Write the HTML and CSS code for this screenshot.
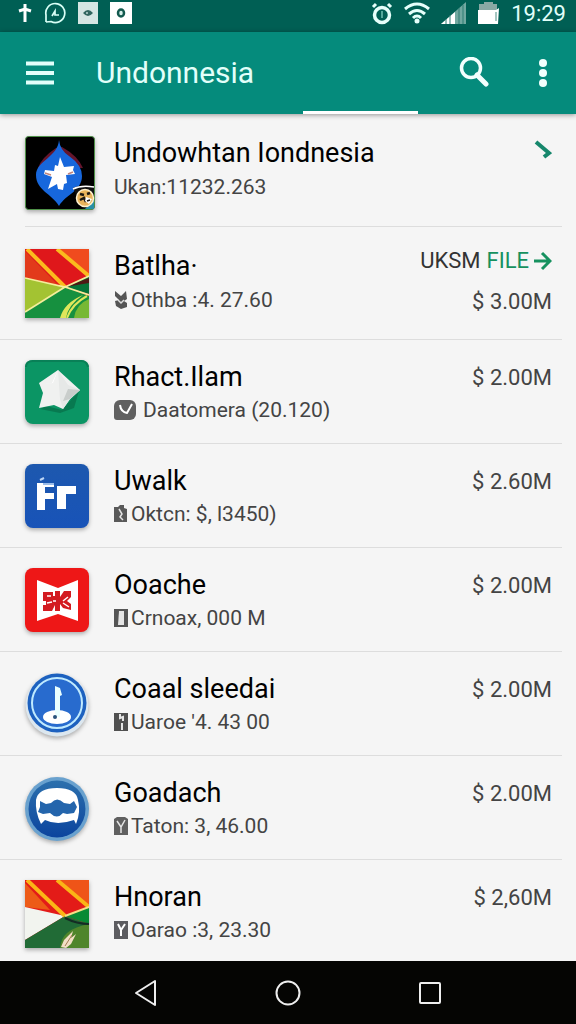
FILE: index.html
```
<!DOCTYPE html>
<html lang="en">
<head>
    <title>Undonnesia</title>
    <meta charset="UTF-8" />
    <meta name="viewport" content="width=device-width, initial-scale=1">
    <link rel="stylesheet" href="styles.css">
</head>
<body>
    <div class="status-bar">
        <div class="status-left">
            <svg width="14" height="22" viewBox="0 0 14 22"><path d="M7 2v18M1 9l6-2 6 2" fill="none" stroke="#fff" stroke-width="3"/></svg>
            <svg width="22" height="22" viewBox="0 0 22 22"><path d="M2 20V13A9.500 9.500 0 1 1 7 19.500L2 20M8 14l3-5v4h4" fill="none" stroke="#d8fff6" stroke-width="1.700"/></svg>
            <svg width="20" height="22" viewBox="0 0 20 22"><path d="M0 0h20v22H0z" fill="#d5e6e3"/><path d="M5 11q5-6 10 0-5 6-10 0" fill="#31665f"/><circle cx="9" cy="11" r="1" fill="#b9d3cf"/></svg>
            <svg width="22" height="22" viewBox="0 0 22 22"><path d="M0 0h22v22H0z" fill="#fff"/><ellipse cx="11" cy="11" rx="3" ry="3.500" fill="#d7efea" stroke="#12594e" stroke-width="2.500"/></svg>
        </div>
        <div class="status-right">
            <svg width="22" height="24" viewBox="0 0 22 24"><circle cx="11" cy="14" r="7.500" fill="none" stroke="#e6fffb" stroke-width="3.500"/><path d="M2 6l3-3M17 3l3 3" stroke="#e6fffb" stroke-width="3"/><path d="M11 10v7" stroke="#54a99c" stroke-width="2"/></svg>
            <svg width="26" height="22" viewBox="0 0 26 22"><path d="M1 7q12-10 24 0M5 12q8-7 16 0M9 16q4-4 8 0" fill="none" stroke="#e6fffb" stroke-width="3"/><circle cx="13" cy="19" r="2.500" fill="#e6fffb"/></svg>
            <svg width="26" height="22" viewBox="0 0 26 22"><path d="M0 22L25 0v22z" fill="#71a8a0"/><path d="M0 22L14 10v12z" fill="#fff"/><path d="M5 17v5M9 13v9M18 6v16M22 3v19" stroke="#2e7d72"/></svg>
            <svg width="22" height="22" viewBox="0 0 22 22"><path d="M1 2h5V0h9v2h4v7H1z" fill="#8aa8a4"/><path d="M0 8h18l3-2-1 16H0z" fill="#fff"/><path d="M18 10v9" stroke="#4b8c83"/></svg>
            <span class="clock">19:29</span>
        </div>
    </div>

    <header class="app-bar">
        <button class="icon-btn" aria-label="Menu">
            <svg width="28" height="24" viewBox="0 0 28 24"><path d="M0 2.500h28M0 12h28M0 21.500h28" stroke="#e2fffa" stroke-width="4"/></svg>
        </button>
        <h1>Undonnesia</h1>
        <button class="icon-btn" aria-label="Search">
            <svg width="30" height="32" viewBox="0 0 30 32"><circle cx="12" cy="11" r="9.500" fill="none" stroke="#f2fffd" stroke-width="3.500"/><path d="M18 18l9 9" stroke="#f2fffd" stroke-width="5" stroke-linecap="round"/></svg>
        </button>
        <button class="icon-btn more" aria-label="More options">
            <svg width="8" height="28" viewBox="0 0 8 28"><g fill="#f2fffd"><circle cx="4" cy="4" r="4"/><circle cx="4" cy="14" r="4"/><circle cx="4" cy="24" r="4"/></g></svg>
        </button>
        <div class="tab-line"></div>
    </header>

    <ul class="list">
        <li class="row tall first">
            <div class="icon">
                <svg class="shadow" width="70" height="74" viewBox="0 0 70 74">
                    <rect x=".5" y=".5" width="69" height="73" rx="3" fill="#000" stroke="#4f9148"/>
                    <path d="M31 12Q16 22 13 32h45Q53 20 37 11z" fill="#65152c"/>
                    <path d="M34 4q1 10 10 16 13 9 13 20c0 15-16 18-23 30C27 58 11 54 11 39c0-14 22-18 23-35z" fill="#1767dc"/>
                    <path d="M35 21l4 10 10-1-1 4 2 4-9 1 1 8-3 1-1 6-5-1-1-5-9 5 4-12-8-3 1-4 9 1 1-6 3 1z" fill="#fff"/>
                    <path d="M20 37l6 2M43 38l5-2" stroke="#c1847c" stroke-width="1.500"/>
                    <path d="M48 52q5-3 21-2v23H58z" fill="#111"/>
                    <path d="M48 53q8-4 21-2" fill="none" stroke="#fff" stroke-width="1.500"/>
                    <path d="M60 73l9-10v10z" fill="#278fa6"/>
                    <circle cx="60" cy="62" r="8.500" fill="#e9b45c" stroke="#fff2d0" stroke-width="1.500"/>
                    <path d="M55 58l4 1M62 58l3-1M55 64l4-2 2 4" fill="none" stroke="#1c1712" stroke-width="2.500"/>
                    <path d="M61 61l6 2-3 5-4-3z" fill="#fff"/>
                    <path d="M62 65l3-1" stroke="#1c1712" stroke-width="1.500"/>
                </svg>
            </div>
            <div class="info">
                <h2>Undowhtan Iondnesia</h2>
                <p>Ukan:11232.263</p>
            </div>
            <div class="side">
                <a href="#" class="arrow" aria-label="Open">
                    <svg width="18" height="20" viewBox="0 0 18 20"><path d="M2 2l13 11-5 4" fill="none" stroke="#16876c" stroke-width="4"/></svg>
                </a>
            </div>
        </li>
        <li class="row tall">
            <div class="icon">
                <svg class="shadow" width="64" height="69" viewBox="0 0 64 69">
                    <path d="M0 0h64v69H0z" fill="#df171b"/>
                    <path d="M35 0h29v27z" fill="#f04b1e"/>
                    <path d="M0 2l33 34-33-7z" fill="#e23a1b"/>
                    <path d="M0 29l40 9L0 63z" fill="#a3c332"/>
                    <path d="M0 63l40-25 24 9v22H0z" fill="#16903f"/>
                    <path d="M40 38l24-11v18z" fill="#087438"/>
                    <path d="M40 38l24-9v5z" fill="#501814"/>
                    <path d="M49 69q2-14 15-19v19z" fill="#77b834"/>
                    <path d="M2 0l38 38M32 0l32 27" stroke="#fbbb1d" stroke-width="4"/>
                    <path d="M0 29l40 9 24-11M0 63l40-25 24 8" fill="none" stroke="#f4ee9c" stroke-width="1.700"/>
                    <path d="M35 69q4-15 23-23-15 10-17 23z" fill="#dfe65b"/>
                    <path d="M42 69q5-14 20-22" fill="none" stroke="#dfe65b" stroke-width="2"/>
                </svg>
            </div>
            <div class="info">
                <h2>Batlha&#183;</h2>
                <p><svg width="14" height="18" viewBox="0 0 14 18"><path d="M1 0l6 5 5-5 1 8-3 2 3 2v4l-6 2-5-3-1-5 4-1-4-4z" fill="#555"/><path d="M4 9l3 3 3-3" fill="none" stroke="#ddd" stroke-width="1.500"/></svg>Othba :4. 27.60</p>
            </div>
            <div class="side">
                <span class="file">UKSM <a href="#">FILE <svg width="18" height="20" viewBox="0 0 18 20"><path d="M0 10h15M8 2l8 8-8 8" fill="none" stroke="#16915f" stroke-width="3"/></svg></a></span>
                <span class="price">$ 3.00M</span>
            </div>
        </li>
        <li class="row">
            <div class="icon">
                <svg class="shadow" width="64" height="64" viewBox="0 0 64 64">
                    <rect width="64" height="64" rx="8" fill="#0b9564"/>
                    <path d="M1 7q0-6 7-6h48q6 0 7 6" fill="none" stroke="#098057" stroke-width="2"/>
                    <path d="M15 49l6-3 16 4 17-19-5 17-14 5z" fill="#087950"/>
                    <path d="M33 10l22 20-10 9-7 10-9-4-15 3 4-15-4-10z" fill="#f0f1f0"/>
                    <path d="M33 10l10 15 12 5-10 9-7 10-3-10z" fill="#e6e8e7"/>
                    <path d="M43 29l12 1-10 9-7 2z" fill="#c9cdcb"/>
                    <path d="M33 10l-6 13-13 2 14-2z" fill="#fff"/>
                </svg>
            </div>
            <div class="info">
                <h2>Rhact.Ilam</h2>
                <p><svg class="wide" width="22" height="20" viewBox="0 0 22 20"><rect width="22" height="20" rx="6" fill="#606060"/><path d="M0 10h8v10H3q-3 0-3-3z" fill="#606060"/><path d="M6 5q1 7 7 8l5-9" fill="none" stroke="#fff" stroke-width="2"/></svg>Daatomera (20.120)</p>
            </div>
            <div class="side"><span class="price">$ 2.00M</span></div>
        </li>
        <li class="row">
            <div class="icon">
                <svg class="shadow" width="64" height="64" viewBox="0 0 64 64">
                    <defs><linearGradient id="blue" x1="0" y1="0" x2="0" y2="1"><stop offset="0" stop-color="#1d58ae"/><stop offset="1" stop-color="#1853b8"/></linearGradient></defs>
                    <rect width="64" height="64" rx="8" fill="url(#blue)"/>
                    <path d="M12 19h17v4h-9v6h9v6h-9v11h-8zM32 22h19v8H41v15h-9z" fill="#fff"/>
                    <path d="M15 16l4-2" stroke="#bcd5f4" stroke-width="2"/>
                    <path d="M18 20h11" stroke="#9abce9" stroke-width="2"/>
                </svg>
            </div>
            <div class="info">
                <h2>Uwalk</h2>
                <p><svg width="14" height="18" viewBox="0 0 14 18"><path d="M0 2h4l2-2h4v3l3 1v13H0z" fill="#595959"/><path d="M5 4l3 5-2 3 3 3" fill="none" stroke="#e4e4e4" stroke-width="1.500"/></svg>Oktcn: $, l3450)</p>
            </div>
            <div class="side"><span class="price">$ 2.60M</span></div>
        </li>
        <li class="row">
            <div class="icon">
                <svg class="shadow" width="64" height="64" viewBox="0 0 64 64">
                    <rect width="64" height="64" rx="8" fill="#ee1717"/>
                    <path d="M12 12l21 8 20-8v41l-20-7-21 7z" fill="#fff"/>
                    <path d="M18 24h10v4h2v-5h5v6l4-6h7v6l-4 4 4 3v6l-8-2-3-4v7h-5v-6l-3 6h-9v-6h3v-4h-3z" fill="#d31b21"/>
                    <path d="M22 28h4M22 35l5-1M31 33h-3M38 33l5-4M38 35l6 4" stroke="#fff" stroke-width="1.500"/>
                </svg>
            </div>
            <div class="info">
                <h2>Ooache</h2>
                <p><svg width="14" height="18" viewBox="0 0 14 18"><path d="M0 0h14v18H0z" fill="#555"/><path d="M5 2h5v14H4z" fill="#e5e5e5"/></svg>Crnoax, 000 M</p>
            </div>
            <div class="side"><span class="price">$ 2.00M</span></div>
        </li>
        <li class="row">
            <div class="icon">
                <svg class="shadow" width="64" height="66" viewBox="0 0 64 66">
                    <circle cx="32" cy="33" r="31.500" fill="#dce7ef"/>
                    <circle cx="32" cy="31" r="29.500" fill="#1d61bf"/>
                    <circle cx="32" cy="31" r="25" fill="#286bce" stroke="#bfeaff" stroke-width="2"/>
                    <ellipse cx="32" cy="45" rx="14" ry="7" fill="#fff"/>
                    <path d="M30 45V14l5 2 2 7-2 1v21z" fill="#eaffff"/>
                    <circle cx="30" cy="45" r="2" fill="#29537c"/>
                </svg>
            </div>
            <div class="info">
                <h2>Coaal sleedai</h2>
                <p><svg width="14" height="18" viewBox="0 0 14 18"><path d="M0 0h14v18H0z" fill="#505050"/><path d="M6 1v4l3-1v4M8 10v7" fill="none" stroke="#e5e5e5" stroke-width="2"/></svg>Uaroe '4. 43 00</p>
            </div>
            <div class="side"><span class="price">$ 2.00M</span></div>
        </li>
        <li class="row">
            <div class="icon">
                <svg class="shadow" width="64" height="66" viewBox="0 0 64 66">
                    <defs><linearGradient id="disc" x1="0" y1="0" x2="0" y2="1"><stop offset="0" stop-color="#2c70ad"/><stop offset="1" stop-color="#0b449e"/></linearGradient></defs>
                    <circle cx="32" cy="33" r="32" fill="#69a1ce"/>
                    <circle cx="32" cy="33" r="28.500" fill="url(#disc)"/>
                    <path d="M11 24q2-12 21-12t21 12q3 12-2 24l-2-4q-17 6-29 0l-4 4q-6-12-5-24z" fill="#fff"/>
                    <path d="M15 25l6 3 5-1q6-7 13 0l6 1 4-3 3 6-3 6-7 1-4-1q-6 7-13 0l-7 1-5-2 2-5z" fill="#2465ac"/>
                </svg>
            </div>
            <div class="info">
                <h2>Goadach</h2>
                <p><svg width="14" height="18" viewBox="0 0 14 18"><path d="M0 2l3-2h8l3 2v16H0z" fill="#606060"/><path d="M3 4l4 6 4-7M7 9v7" fill="none" stroke="#e5e5e5" stroke-width="1.500"/></svg>Taton: 3, 46.00</p>
            </div>
            <div class="side"><span class="price">$ 2.00M</span></div>
        </li>
        <li class="row">
            <div class="icon">
                <svg class="shadow" width="64" height="68" viewBox="0 0 64 68">
                    <path d="M0 0h64v68H0z" fill="#e31b18"/>
                    <path d="M35 0h29v27z" fill="#ef5418"/>
                    <path d="M0 3l25 27-25-3z" fill="#ed5b17"/>
                    <path d="M0 27l40 9L0 60z" fill="#f2f4ef"/>
                    <path d="M0 60l40-24 24 8v24H0z" fill="#216b36"/>
                    <path d="M40 36l24-9v17z" fill="#098a34"/>
                    <path d="M35 68q1-19 29-24v24z" fill="#4f852b"/>
                    <path d="M2 0l38 36M32 0l32 27" stroke="#fbb516" stroke-width="4"/>
                    <path d="M40 36l24-9" stroke="#f4de86" stroke-width="2"/>
                    <path d="M40 38q12 6 24 6" fill="none" stroke="#152c24" stroke-width="2"/>
                    <path d="M36 67l3-7 9-9-2 7 5-4-5 10-5 4z" fill="#f2dfc5"/>
                    <path d="M40 66l7-11" stroke="#a37b53"/>
                </svg>
            </div>
            <div class="info">
                <h2>Hnoran</h2>
                <p><svg width="14" height="18" viewBox="0 0 14 18"><path d="M0 0h14v18H0z" fill="#5c5c60"/><path d="M4 3l3 6 4-6M7 8v7" fill="none" stroke="#fff" stroke-width="2"/></svg>Oarao :3, 23.30</p>
            </div>
            <div class="side"><span class="price">$ 2,60M</span></div>
        </li>
    </ul>

    <nav class="nav-bar">
        <button class="icon-btn" aria-label="Back">
            <svg width="24" height="28" viewBox="0 0 24 28"><path d="M21 2v24L2 14z" fill="none" stroke="#eee" stroke-width="2" stroke-linejoin="round"/></svg>
        </button>
        <button class="icon-btn" aria-label="Home">
            <svg width="28" height="28" viewBox="0 0 28 28"><circle cx="14" cy="14" r="11.500" fill="none" stroke="#eee" stroke-width="2"/></svg>
        </button>
        <button class="icon-btn" aria-label="Recent apps">
            <svg width="24" height="28" viewBox="0 0 24 28"><rect x="2" y="4" width="20" height="20" rx="1" fill="none" stroke="#eee" stroke-width="2"/></svg>
        </button>
    </nav>
</body>
</html>
```
FILE: styles.css
```
* {
    box-sizing: border-box;
}

body {
    font-family: Roboto, "Liberation Sans", sans-serif;
    margin: 0;
    min-height: 100vh;
    display: flex;
    flex-direction: column;
    background: #f5f5f5;
    color: #000;
}

svg {
    display: block;
    flex-shrink: 0;
}

.status-bar {
    display: flex;
    justify-content: space-between;
    height: 32px;
    padding: 0 10px 6px 18px;
    background: #005f54;
}

.status-left,
.status-right {
    display: flex;
    align-items: center;
}

.status-left {
    gap: 12px;
}

.status-right {
    gap: 11px;
}

.clock {
    padding-top: 2px;
    color: #e2fffa;
    font-size: 22px;
    line-height: 26px;
}

.app-bar {
    position: relative;
    display: flex;
    align-items: center;
    height: 82px;
    padding: 0 29px 0 26px;
    background: #058b7c;
    box-shadow: 0 1px 5px rgba(0,0,0,0.4);
}

.app-bar h1 {
    flex: 1;
    margin: 0 0 0 42px;
    color: #e2fffa;
    font-size: 30px;
    font-weight: 400;
    line-height: 40px;
}

.icon-btn {
    padding: 0;
    border: none;
    background: none;
    cursor: pointer;
}

.more {
    margin-left: 50px;
}

/* selected tab marker, sits on the bottom edge of the bar */
.tab-line {
    position: absolute;
    right: 158px;
    bottom: 0;
    width: 20%;
    height: 3px;
    background: #fff;
}

.list {
    flex: 1;
    margin: 0;
    padding: 0 14px 0 0;
    list-style: none;
}

.row {
    display: flex;
    gap: 19px;
    min-height: 104px;
    padding: 20px 10px 0 25px;
    border-bottom: 1px solid #ddd;
}

.row:last-child {
    min-height: 0;
    border-bottom: none;
}

.tall {
    min-height: 113px;
    padding-top: 22px;
}

.first {
    margin-left: 25px;
    padding-left: 0;
}

.icon {
    width: 70px;
}

.shadow {
    filter: drop-shadow(0 2px 2px rgba(0,0,0,0.3));
}

.info {
    flex: 1;
}

.info h2 {
    margin: 3px 0 5px;
    font-size: 27px;
    font-weight: 400;
    line-height: 28px;
    white-space: nowrap;
}

.info p {
    display: flex;
    align-items: center;
    gap: 3px;
    margin: 0;
    color: #444;
    font-size: 21px;
    line-height: 28px;
    white-space: nowrap;
}

.tall h2 {
    margin-bottom: 6px;
}

.wide {
    margin-right: 4px;
}

.side {
    display: flex;
    flex-direction: column;
    align-items: flex-end;
}

.price {
    margin-top: 4px;
    color: #444;
    font-size: 22px;
    line-height: 28px;
}

.arrow {
    margin-top: 4px;
}

.file {
    display: flex;
    gap: 6px;
    color: #333;
    font-size: 22px;
    line-height: 24px;
}

.file a {
    display: flex;
    align-items: center;
    gap: 5px;
    color: #16915f;
    text-decoration: none;
}

.tall .file + .price {
    margin-top: 15px;
}

.nav-bar {
    display: flex;
    justify-content: center;
    align-items: center;
    gap: 116px;
    height: 63px;
    background: #050503;
}
```
